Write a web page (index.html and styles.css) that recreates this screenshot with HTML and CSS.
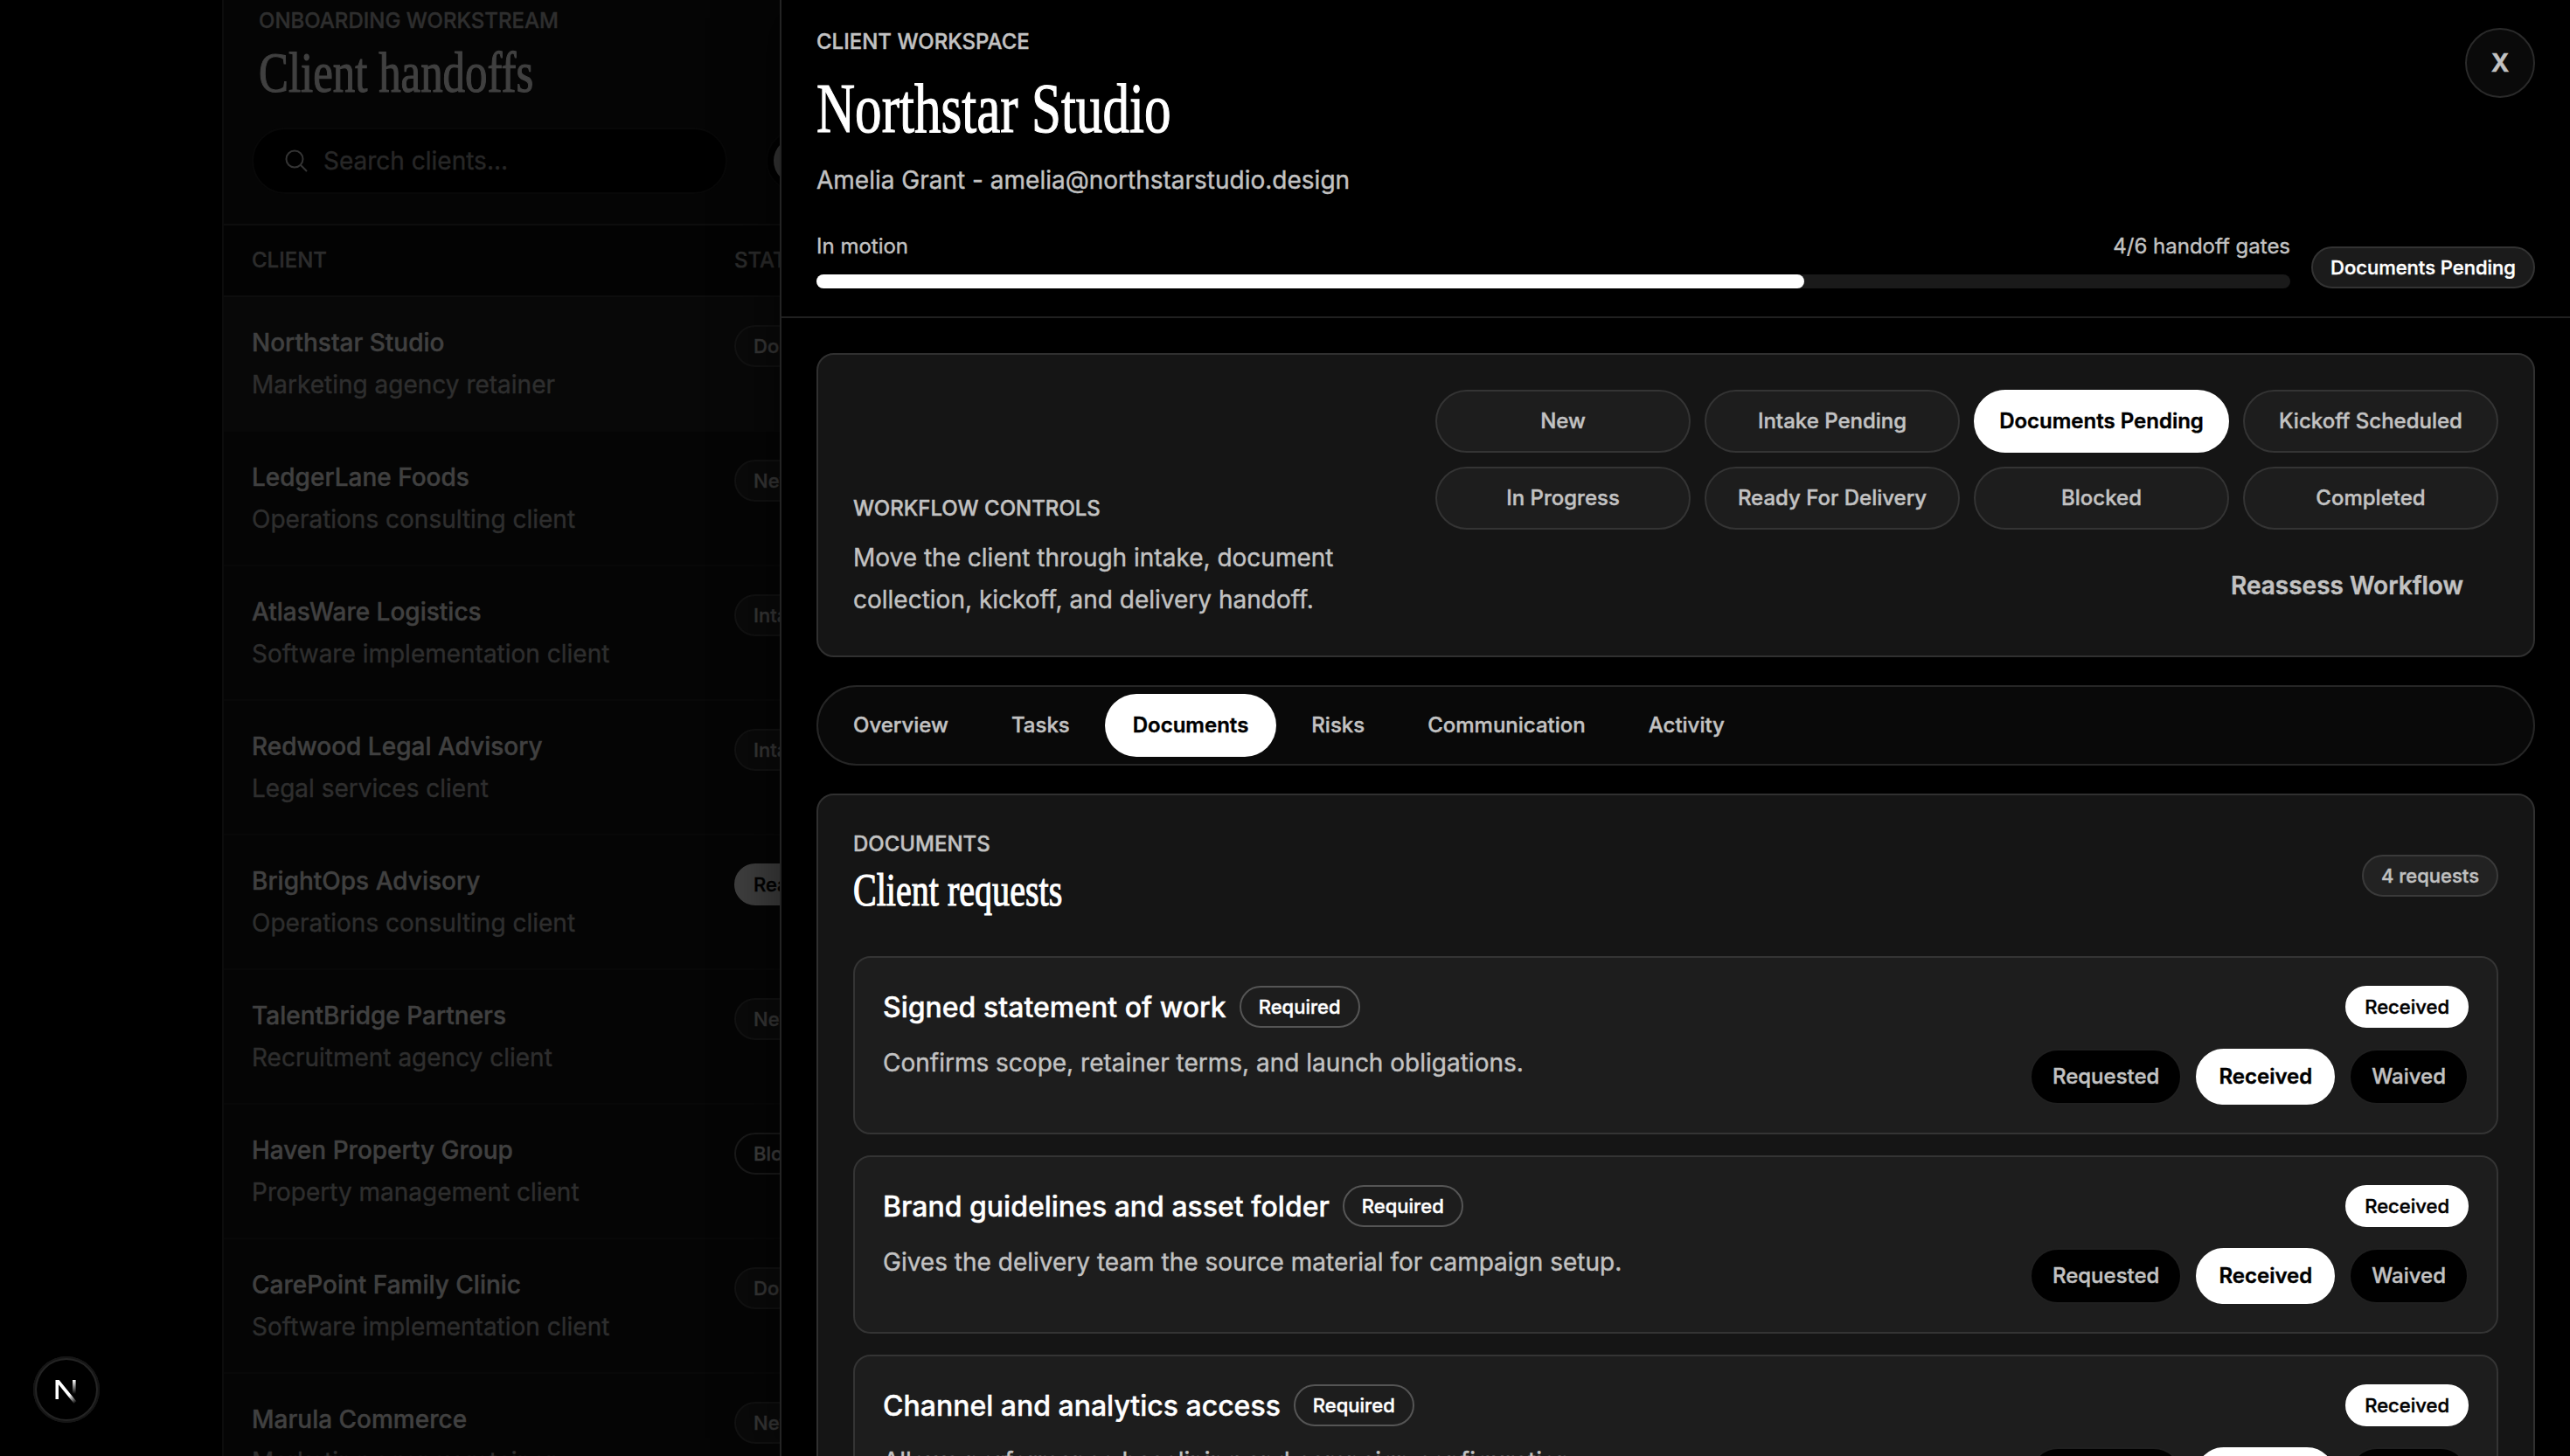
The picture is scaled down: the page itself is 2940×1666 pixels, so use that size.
FILE: index.html
```
<!DOCTYPE html>
<html lang="en">
<head>
  <meta charset="UTF-8">
  <meta name="viewport" content="width=device-width, initial-scale=1.0">
  <title>Client handoffs</title>
  <link rel="stylesheet" href="styles.css">
</head>
<body>
  <main class="workstream">
    <header class="workstream-header">
      <p class="eyebrow">ONBOARDING WORKSTREAM</p>
      <h1 class="serif">Client handoffs</h1>
      <div class="toolbar">
        <div class="search">
          <svg width="28" height="28" viewBox="0 0 28 28" fill="none" stroke="currentColor" stroke-width="2">
            <circle cx="12" cy="12" r="9.5" />
            <path d="M18.8 18.8L26 26" />
          </svg>
          <span>Search clients...</span>
        </div>
        <div class="toggle"><span class="thumb"></span></div>
      </div>
    </header>
    <div class="table-head">
      <span>CLIENT</span>
      <span>STATUS</span>
    </div>
    <div class="client-row selected">
      <div><h2>Northstar Studio</h2><p>Marketing agency retainer</p></div>
      <span class="status">Documents Pending</span>
    </div>
    <div class="client-row">
      <div><h2>LedgerLane Foods</h2><p>Operations consulting client</p></div>
      <span class="status">New</span>
    </div>
    <div class="client-row">
      <div><h2>AtlasWare Logistics</h2><p>Software implementation client</p></div>
      <span class="status">Intake Pending</span>
    </div>
    <div class="client-row">
      <div><h2>Redwood Legal Advisory</h2><p>Legal services client</p></div>
      <span class="status">Intake Pending</span>
    </div>
    <div class="client-row">
      <div><h2>BrightOps Advisory</h2><p>Operations consulting client</p></div>
      <span class="status ready">Ready For Delivery</span>
    </div>
    <div class="client-row">
      <div><h2>TalentBridge Partners</h2><p>Recruitment agency client</p></div>
      <span class="status">New</span>
    </div>
    <div class="client-row">
      <div><h2>Haven Property Group</h2><p>Property management client</p></div>
      <span class="status blocked">Blocked</span>
    </div>
    <div class="client-row">
      <div><h2>CarePoint Family Clinic</h2><p>Software implementation client</p></div>
      <span class="status">Documents Pending</span>
    </div>
    <div class="client-row">
      <div><h2>Marula Commerce</h2><p>Marketing agency retainer</p></div>
      <span class="status">New</span>
    </div>
  </main>

  <aside class="drawer">
    <header class="drawer-header">
      <button class="close">X</button>
      <p class="eyebrow">CLIENT WORKSPACE</p>
      <h1 class="serif">Northstar Studio</h1>
      <p class="contact">Amelia Grant - amelia@northstarstudio.design</p>
      <div class="progress-row">
        <div class="progress">
          <div class="progress-labels">
            <span>In motion</span>
            <span>4/6 handoff gates</span>
          </div>
          <div class="track"><div class="fill" style="width: 67%"></div></div>
        </div>
        <span class="tag pending">Documents Pending</span>
      </div>
    </header>

    <div class="drawer-body">
      <section class="card workflow">
        <div class="workflow-copy">
          <p class="eyebrow">WORKFLOW CONTROLS</p>
          <p>Move the client through intake, document collection, kickoff, and delivery handoff.</p>
        </div>
        <div class="workflow-actions">
          <div class="stages">
            <button>New</button>
            <button>Intake Pending</button>
            <button class="active">Documents Pending</button>
            <button>Kickoff Scheduled</button>
            <button>In Progress</button>
            <button>Ready For Delivery</button>
            <button>Blocked</button>
            <button>Completed</button>
          </div>
          <button class="reassess">Reassess Workflow</button>
        </div>
      </section>

      <nav class="tabs">
        <button>Overview</button>
        <button>Tasks</button>
        <button class="active">Documents</button>
        <button>Risks</button>
        <button>Communication</button>
        <button>Activity</button>
      </nav>

      <section class="card documents">
        <div class="section-header">
          <div>
            <p class="eyebrow">DOCUMENTS</p>
            <h2 class="serif">Client requests</h2>
          </div>
          <span class="tag count">4 requests</span>
        </div>

        <article class="request">
          <div>
            <div class="request-title"><h3>Signed statement of work</h3><span class="tag required">Required</span></div>
            <p>Confirms scope, retainer terms, and launch obligations.</p>
          </div>
          <div class="request-side">
            <span class="tag received">Received</span>
            <div class="choices">
              <button>Requested</button>
              <button class="active">Received</button>
              <button>Waived</button>
            </div>
          </div>
        </article>

        <article class="request">
          <div>
            <div class="request-title"><h3>Brand guidelines and asset folder</h3><span class="tag required">Required</span></div>
            <p>Gives the delivery team the source material for campaign setup.</p>
          </div>
          <div class="request-side">
            <span class="tag received">Received</span>
            <div class="choices">
              <button>Requested</button>
              <button class="active">Received</button>
              <button>Waived</button>
            </div>
          </div>
        </article>

        <article class="request">
          <div>
            <div class="request-title"><h3>Channel and analytics access</h3><span class="tag required">Required</span></div>
            <p>Allows performance baselining and campaign configuration.</p>
          </div>
          <div class="request-side">
            <span class="tag received">Received</span>
            <div class="choices">
              <button>Requested</button>
              <button class="active">Received</button>
              <button>Waived</button>
            </div>
          </div>
        </article>
      </section>
    </div>
  </aside>

  <div class="dev-badge">
    <svg width="76" height="76" viewBox="0 0 76 76" fill="none">
      <defs>
        <linearGradient id="diagonal" x1="42" y1="44" x2="49" y2="53" gradientUnits="userSpaceOnUse">
          <stop stop-color="#fff" />
          <stop offset="1" stop-color="#fff" stop-opacity="0" />
        </linearGradient>
        <linearGradient id="stem" x1="47" y1="27" x2="47" y2="43" gradientUnits="userSpaceOnUse">
          <stop stop-color="#fff" />
          <stop offset="1" stop-color="#fff" stop-opacity="0" />
        </linearGradient>
      </defs>
      <path d="M25.5 49V27H29.6L49.5 51.5L46.6 54L29 32.2V49Z" fill="url(#diagonal)" />
      <rect x="45" y="27" width="3.6" height="16" fill="url(#stem)" />
    </svg>
  </div>
</body>
</html>
```
FILE: styles.css
```
* {
  margin: 0;
  padding: 0;
  box-sizing: border-box;
}

body {
  position: relative;
  height: 1666px;
  overflow: hidden;
  background: #000;
  color: #c2c2c2;
  font-family: Inter, "Liberation Sans", sans-serif;
  font-size: 28px;
  line-height: 48px;
  -webkit-text-stroke: 0.4px currentColor;
}

button {
  border: none;
  background: none;
  color: inherit;
  font: inherit;
  white-space: nowrap;
}

.eyebrow {
  font-size: 24px;
  font-weight: 500;
  line-height: 32px;
}

.serif {
  width: max-content;
  color: #fff;
  font-family: "Liberation Serif", serif;
  font-weight: 400;
  transform-origin: left center;
  -webkit-text-stroke: 1.2px currentColor;
}

/* client list behind the drawer */

.workstream {
  width: 1200px;
  height: 1666px;
  margin-left: 254px;
  overflow: hidden;
  background: #050505;
  border-left: 2px solid #0c0c0c;
  color: #2e2e2e;
}

.workstream-header {
  height: 258px;
  padding: 8px 32px 0;
  border-bottom: 2px solid #0d0d0d;
}

.workstream-header .eyebrow,
.workstream-header .serif {
  margin-left: 8px;
}

.workstream-header .serif {
  margin-top: 11px;
  color: #404040;
  font-size: 65px;
  line-height: 64px;
  transform: scaleX(0.783);
}

.toolbar {
  display: flex;
  align-items: center;
  gap: 44px;
  margin-top: 31px;
}

.search {
  display: flex;
  align-items: center;
  gap: 17px;
  width: 544px;
  height: 76px;
  padding-left: 35px;
  background: #000;
  border: 2px solid #080808;
  border-radius: 38px;
  color: #272727;
}

.search svg {
  color: #343434;
}

.toggle {
  width: 140px;
  height: 72px;
  padding: 7px;
  background: #000;
  border: 2px solid #070707;
  border-radius: 36px;
}

.thumb {
  display: block;
  width: 54px;
  height: 54px;
  background: #383838;
  border-radius: 50%;
}

.table-head {
  display: flex;
  height: 82px;
  padding-left: 32px;
  background: #030303;
  border-bottom: 2px solid #0d0d0d;
  color: #2c2c2c;
  font-size: 24px;
  font-weight: 500;
  line-height: 80px;
}

.table-head span {
  width: 552px;
}

.client-row {
  display: flex;
  height: 154px;
  padding: 28px 32px;
  border-bottom: 2px solid #080808;
}

.client-row.selected {
  background: #080808;
}

.client-row > div {
  width: 552px;
}

.client-row h2 {
  color: #404040;
  font-size: 28px;
  font-weight: 500;
}

.status {
  height: 48px;
  margin-top: 4px;
  padding: 0 20px;
  background: #0a0a0a;
  border: 2px solid #121212;
  border-radius: 24px;
  color: #383838;
  font-size: 22px;
  font-weight: 500;
  line-height: 44px;
}

.status.ready {
  background: #404040;
  border-color: #404040;
  color: #000;
}

.status.blocked {
  background: none;
  border-color: #1a1a1a;
  color: #404040;
}

/* drawer */

.drawer {
  position: absolute;
  top: 0;
  right: 0;
  width: 2048px;
  height: 1666px;
  background: #000;
  border-left: 2px solid #232323;
  box-shadow: -12px 0 60px rgba(0, 0, 0, 0.45);
}

.drawer-header {
  position: relative;
  height: 364px;
  padding: 32px 40px;
  border-bottom: 2px solid #202020;
}

.drawer-header .serif {
  margin-top: 18px;
  font-size: 81px;
  line-height: 84px;
  transform: scaleX(0.754);
}

.contact {
  margin-top: 16px;
}

.close {
  position: absolute;
  top: 32px;
  right: 40px;
  width: 80px;
  height: 80px;
  background: #0a0a0a;
  border: 2px solid #2a2a2a;
  border-radius: 50%;
  font-weight: 700;
}

.progress-row {
  display: flex;
  align-items: flex-end;
  gap: 24px;
  margin-top: 30px;
}

.progress {
  flex: 1;
}

.progress-labels {
  display: flex;
  justify-content: space-between;
  margin-bottom: 11px;
  font-size: 24px;
  line-height: 43px;
}

.track {
  height: 16px;
  background: #1a1a1a;
  border-radius: 8px;
}

.fill {
  height: 16px;
  background: #fff;
  border-radius: 8px;
}

.tag {
  display: inline-block;
  height: 48px;
  padding: 0 20px;
  border: 2px solid #333;
  border-radius: 24px;
  color: #fff;
  font-size: 22px;
  font-weight: 500;
  line-height: 44px;
}

.tag.pending {
  background: #1b1b1b;
}

.tag.count {
  background: #222;
  border-color: #3a3a3a;
  color: #c0c0c0;
}

.tag.required {
  border-color: #555;
}

.tag.received {
  background: #fff;
  border-color: #fff;
  color: #000;
}

.drawer-body {
  display: flex;
  flex-direction: column;
  gap: 32px;
  height: 1302px;
  padding: 40px 40px 0;
  overflow: hidden;
}

.card {
  flex-shrink: 0;
  padding: 40px;
  background: #151515;
  border: 2px solid #303030;
  border-radius: 20px;
}

.workflow {
  display: flex;
  justify-content: space-between;
  align-items: flex-end;
}

.workflow-copy {
  width: 600px;
}

.workflow-copy .eyebrow {
  margin-bottom: 16px;
}

.workflow-actions {
  display: flex;
  flex-direction: column;
  align-items: flex-end;
  gap: 24px;
}

.stages {
  display: grid;
  grid-template-columns: repeat(4, 292px);
  gap: 16px;
}

.stages button {
  height: 72px;
  background: #1d1d1d;
  border: 2px solid #343434;
  border-radius: 36px;
  font-size: 24px;
  font-weight: 500;
}

.tabs {
  display: flex;
  flex-shrink: 0;
  gap: 8px;
  padding: 8px;
  background: #090909;
  border: 2px solid #262626;
  border-radius: 46px;
}

.tabs button {
  height: 72px;
  padding: 0 32px;
  border-radius: 36px;
  font-size: 24px;
  font-weight: 500;
}

.reassess {
  height: 80px;
  padding: 0 40px;
  font-weight: 600;
}

.documents {
  display: flex;
  flex-direction: column;
  gap: 24px;
}

.section-header {
  display: flex;
  justify-content: space-between;
  align-items: center;
  height: 104px;
  margin-bottom: 16px;
}

.section-header .eyebrow {
  line-height: 30px;
}

.section-header .serif {
  margin-top: 7px;
  margin-bottom: 5px;
  font-size: 53px;
  line-height: 60px;
  transform: scaleX(0.756);
}

.request {
  display: flex;
  justify-content: space-between;
  height: 204px;
  padding: 32px;
  background: #1d1d1d;
  border: 2px solid #343434;
  border-radius: 20px;
}

.request-title {
  display: flex;
  align-items: center;
  gap: 15px;
  margin-bottom: 15px;
}

.request-title h3 {
  color: #fff;
  font-size: 32px;
  font-weight: 500;
  line-height: 49px;
}

.request-title .tag {
  margin-bottom: 1px;
}

.request-side {
  display: flex;
  flex-direction: column;
  align-items: flex-end;
  gap: 24px;
}

.choices {
  display: flex;
  gap: 16px;
}

.choices button {
  height: 64px;
  padding: 0 24px;
  background: #000;
  border: 2px solid #1f1f1f;
  border-radius: 32px;
  font-size: 24px;
  font-weight: 500;
}

.stages .active,
.tabs .active,
.choices .active {
  background: #fff;
  border-color: #fff;
  color: #000;
  font-weight: 600;
}

/* dev tools indicator */

.dev-badge {
  position: absolute;
  left: 38px;
  bottom: 38px;
  width: 76px;
  height: 76px;
  background: #000;
  border-radius: 50%;
  box-shadow: inset 0 0 0 2px #151515, inset 0 0 0 4px #242424;
}

.dev-badge svg {
  display: block;
}
```
